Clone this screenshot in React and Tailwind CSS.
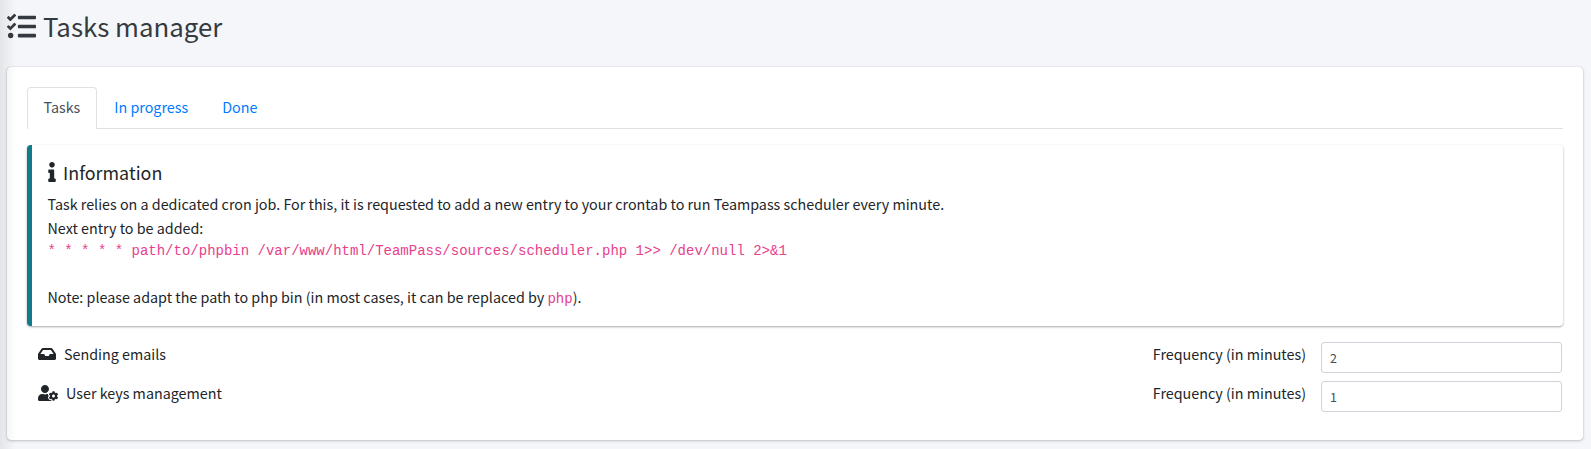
import { FaTasks, FaInfo, FaInbox, FaUserCog } from "react-icons/fa";

const TABS = ["Tasks", "In progress", "Done"];

const TASKS = [
  { label: "Sending emails", Icon: FaInbox, iconClass: "h-4 w-[18px]", frequency: "2" },
  { label: "User keys management", Icon: FaUserCog, iconClass: "h-4 w-5", frequency: "1" },
];

function Tabs() {
  return (
    <nav className="flex h-[42px] border-b border-[#dee2e6]">
      {TABS.map((tab, index) => (
        <a
          key={tab}
          className={
            index === 0
              ? "-mb-px h-[42px] rounded-t border border-b-0 border-[#dee2e6] bg-white pt-[7px] pr-4 pl-[15.5px] text-[#495057]"
              : "h-[42px] border border-transparent px-4 pt-[7px] text-[#007bff]"
          }
        >
          {tab}
        </a>
      ))}
    </nav>
  );
}

function Callout() {
  return (
    <section className="mt-4 h-[181px] rounded border-l-[5px] border-[#117a8b] bg-white pt-[15px] pr-4 pb-4 pl-[15.5px] shadow-[0_1px_3px_rgba(0,0,0,0.12),0_1px_2px_rgba(0,0,0,0.24)]">
      <h5 className="mb-2 flex h-6 items-center text-[17.9px]">
        <FaInfo className="mr-[7.5px] h-5 w-[8px]" />
        Information
      </h5>
      <p>
        Task relies on a dedicated cron job. For this, it is requested to add a new entry to your
        crontab to run Teampass scheduler every minute.
      </p>
      <p>Next entry to be added:</p>
      <code className="block h-[45px] pt-px font-['Liberation_Mono',monospace] text-[14px] leading-[20px] text-[#e83e8c]">
        * * * * * path/to/phpbin /var/www/html/TeamPass/sources/scheduler.php 1&gt;&gt; /dev/null
        2&gt;&amp;1
      </code>
      <p>
        Note: please adapt the path to php bin (in most cases, it can be replaced by{" "}
        <span className="font-['Liberation_Mono',monospace] text-[14px] text-[#e83e8c]">php</span>
        ).
      </p>
    </section>
  );
}

function TaskRow({ label, Icon, iconClass, frequency }) {
  return (
    <div className="flex h-[39px]">
      <div className="flex h-6 flex-1 items-center">
        <Icon className={`mr-2 ${iconClass}`} />
        {label}
      </div>
      <span className="mr-[15px] h-6">Frequency (in minutes)</span>
      <input
        className="h-[31px] w-[241px] rounded-[3px] border border-[#ced4da] bg-white px-2 text-[12.5px] text-[#495057]"
        defaultValue={frequency}
      />
    </div>
  );
}

export default function App() {
  return (
    <div className="relative h-[449px] overflow-hidden bg-[#f4f6f9] pl-[7px] pr-2 font-['Noto_Sans_CJK_SC',sans-serif] text-[14.32px] leading-6 text-[#212529]">
      <h1 className="flex h-[67px] items-start pt-[9px] text-[25.8px] leading-[34px] text-[#343a40]">
        <FaTasks className="mt-[2.5px] -ml-[0.5px] mr-[7.5px] h-[29px] w-[29px]" />
        Tasks manager
      </h1>
      <main className="h-[373px] rounded bg-white p-5 shadow-[0_0_1px_rgba(0,0,0,0.3),0_1px_3px_rgba(0,0,0,0.2)]">
        <Tabs />
        <Callout />
        <div className="mt-4 pl-[11px] pr-px">
          {TASKS.map((task) => (
            <TaskRow key={task.label} {...task} />
          ))}
        </div>
      </main>
      <div className="pointer-events-none absolute inset-y-0 left-0 w-4 bg-linear-to-r from-black/7 to-transparent" />
    </div>
  );
}
